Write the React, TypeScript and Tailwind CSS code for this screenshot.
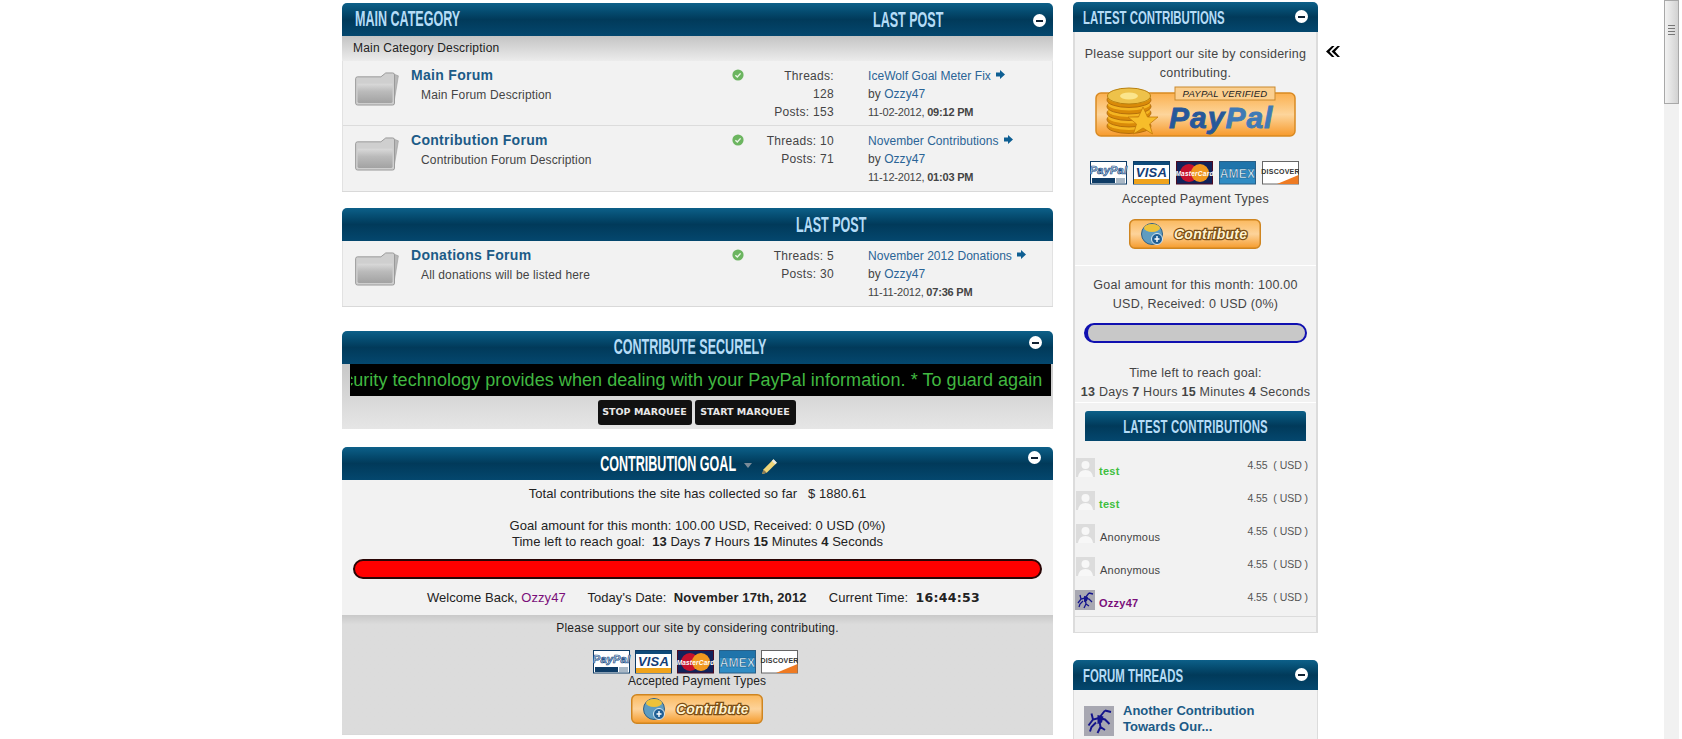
const arial = 'font-["Liberation_Sans",Arial,sans-serif]';

function Title({ children, center, white, side }: { children: string; center?: boolean; white?: boolean; side?: boolean }) {
  return (
    <span
      className={`inline-block whitespace-nowrap font-["Liberation_Sans",sans-serif] font-bold leading-none ${
        side ? 'text-[19px] scale-x-[.6]' : 'text-[22px] scale-x-[.57]'
      } ${center ? 'origin-center' : 'origin-left'} ${white ? 'text-white' : 'text-[#b5dcf7]'}`}
    >
      {children}
    </span>
  );
}

function Collapse({ className = '' }: { className?: string }) {
  return (
    <span className={`flex h-[13px] w-[13px] items-center justify-center rounded-full bg-white ${className}`}>
      <span className="h-[2px] w-[7px] bg-[#123]" />
    </span>
  );
}

function Folder() {
  return (
    <svg width="46" height="35" viewBox="0 0 46 36" className="shrink-0">
      <defs>
        <linearGradient id="fd" x1="0" y1="0" x2="0" y2="1">
          <stop offset="0" stopColor="#dadada" />
          <stop offset=".4" stopColor="#bbb" />
          <stop offset="1" stopColor="#a2a2a2" />
        </linearGradient>
      </defs>
      <path d="M40 3l5 2-5 30z" fill="#b8b8b8" stroke="#999" strokeWidth=".6" />
      <path d="M1 8q0-2 2-2h24l5-4h7q2 0 2 2v29q0 2-2 2H3q-2 0-2-2z" fill="#cfcfcf" stroke="#999" />
      <path d="M3 13h36v18q0 2-2 2H5q-2 0-2-2z" fill="url(#fd)" />
    </svg>
  );
}

function Check() {
  return (
    <svg width="12" height="12" viewBox="0 0 12 12" className="shrink-0">
      <circle cx="6" cy="6" r="5.6" fill="#6cb560" />
      <path d="M3.4 6.200l1.900 1.800 3.300-3.600" fill="none" stroke="#eaf6e6" strokeWidth="1.400" />
    </svg>
  );
}

function ArrowRight() {
  return (
    <svg width="9" height="9" viewBox="0 0 9 9" className="ml-[5px] inline-block align-[1px]">
      <path d="M0 2.500h4V0l5 4.500L4 9V6.500H0z" fill="#0e5f93" />
    </svg>
  );
}

function ForumRow({ title, desc, threads, posts, last, date, time, border }: {
  title: string;
  desc: string;
  threads: string;
  posts: string;
  last: string;
  date: string;
  time: string;
  border?: boolean;
}) {
  return (
    <div className={`flex h-[65px] items-start bg-[#f2f2f2] ${border ? 'border-b border-[#dcdcdc]' : ''}`}>
      <div className="ml-[11px] mt-[10px]">
        <Folder />
      </div>
      <div className="ml-[11px] mt-[5px] w-[321px]">
        <p className="text-[14px] font-bold leading-[18px] tracking-[.3px] text-[#1c5b87]">{title}</p>
        <p className="ml-[10px] mt-[2px] text-[12px] leading-[18px] tracking-[.15px] text-[#444]">{desc}</p>
      </div>
      <div className="mt-[8px]">
        <Check />
      </div>
      <p className="ml-[18px] mt-[6px] w-[72px] text-right text-[12px] leading-[18px] tracking-[.3px] text-[#444]">
        Threads: {threads}
        <br />
        Posts: {posts}
      </p>
      <div className="ml-[34px] mt-[6px] text-[12px] leading-[18px] tracking-[.05px] text-[#444]">
        <p className="whitespace-nowrap text-[#2a6496]">
          {last}
          <ArrowRight />
        </p>
        <p>
          by <span className="text-[#2a6496]">Ozzy47</span>
        </p>
        <p className="text-[11px] tracking-[-.2px]">
          {date}, <b className="font-bold">{time}</b>
        </p>
      </div>
    </div>
  );
}

function Header({ children, className = '' }: { children: React.ReactNode; className?: string }) {
  return (
    <div className={`relative flex items-center rounded-t-[5px] bg-gradient-to-b from-[#0d6089] via-[#013a5a] to-[#04476e] ${className}`}>
      {children}
    </div>
  );
}

function CardRow({ pitch, className = '' }: { pitch: number; className?: string }) {
  return (
    <svg width={pitch * 4 + 37} height="24" viewBox={`0 0 ${pitch * 4 + 37} 24`} className={className}>
      <g>
        <rect x=".5" y=".5" width="36" height="22.500" fill="#fff" stroke="#0e3c66" />
        <text x="18.500" y="13" textAnchor="middle" fontFamily="Liberation Sans" fontStyle="italic" fontWeight="700" fontSize="11" fill="#c4d8ec" stroke="#1d4f86" strokeWidth=".7">PayPal</text>
        <rect x="2" y="17" width="23" height="5" fill="#0e3c66" />
        <rect x="26" y="17" width="9" height="5" fill="#a9b8c6" />
      </g>
      <g transform={`translate(${pitch} 0)`}>
        <rect x=".5" y=".5" width="36" height="22.500" fill="#fff" stroke="#0e3c66" />
        <rect x="1" y="1" width="35" height="3" fill="#0e4a7a" />
        <rect x="1" y="18" width="35" height="5" fill="#efa31c" />
        <text x="18.500" y="16" textAnchor="middle" fontFamily="Liberation Sans" fontStyle="italic" fontWeight="700" fontSize="13" fill="#133d78">VISA</text>
      </g>
      <g transform={`translate(${pitch * 2} 0)`}>
        <rect x=".5" y=".5" width="36" height="22.500" fill="#12225a" stroke="#4d0b22" />
        <circle cx="13" cy="12" r="9" fill="#c5112d" />
        <circle cx="24" cy="12" r="9" fill="#f0971e" />
        <text x="18.500" y="14.500" textAnchor="middle" fontFamily="Liberation Sans" fontStyle="italic" fontWeight="700" fontSize="6.500" fill="#fff">MasterCard</text>
      </g>
      <g transform={`translate(${pitch * 3} 0)`}>
        <rect x=".5" y=".5" width="36" height="22.500" fill="#2f8cc4" stroke="#285f86" />
        <rect x="1" y="1" width="35" height="7" fill="#1f74ab" />
        <text x="18.500" y="17" textAnchor="middle" fontFamily="Liberation Sans" fontWeight="700" fontSize="12" fill="#e8f5fc" stroke="#0d5685" strokeWidth=".5">AMEX</text>
      </g>
      <g transform={`translate(${pitch * 4} 0)`}>
        <rect x=".5" y=".5" width="36" height="22.500" fill="#fff" stroke="#666" />
        <path d="M15 23L36.500 14v9z" fill="#ee7a22" />
        <text x="18.500" y="13" textAnchor="middle" fontFamily="Liberation Sans" fontWeight="700" fontSize="7" fill="#333">DISCOVER</text>
      </g>
    </svg>
  );
}

function Coins() {
  const rows = [38, 31.500, 25, 18.500, 12];
  return (
    <g>
      {rows.map((y) => (
        <g key={y}>
          <ellipse cx="22" cy={y + 1} rx="22" ry="7.500" fill="#d98a08" stroke="#a9640a" strokeWidth=".8" />
          <ellipse cx="22" cy={y - 1} rx="21" ry="6" fill="#f4b521" />
        </g>
      ))}
      <ellipse cx="22" cy="9" rx="21.500" ry="8" fill="#eec24a" stroke="#b9800f" />
      <ellipse cx="22" cy="9" rx="9" ry="3.500" fill="#fbe58c" />
      <path d="M36 20l4.500 10H51l-8.500 7 3 10-9.500-6-9.500 6 3-10-8.500-7h10.500z" fill="#f7bd2a" stroke="#c47a0a" strokeWidth=".8" />
    </g>
  );
}

function PayPalButton() {
  return (
    <svg width="202" height="52" viewBox="0 0 202 52" className="block">
      <defs>
        <linearGradient id="pp" x1="0" y1="0" x2="0" y2="1">
          <stop offset="0" stopColor="#fbb04f" />
          <stop offset=".5" stopColor="#fdd59b" />
          <stop offset="1" stopColor="#f79a2c" />
        </linearGradient>
      </defs>
      <rect x="1" y="7" width="199" height="43" rx="5" fill="url(#pp)" stroke="#d98a22" strokeWidth="1.500" />
      <rect x="80" y="1" width="100" height="13" fill="#fbcf8f" stroke="#c9892e" />
      <text x="130" y="11" textAnchor="middle" fontFamily="Liberation Sans" fontStyle="italic" fontSize="9.500" fill="#222">PAYPAL  VERIFIED</text>
      <g transform="translate(12 1)">
        <Coins />
      </g>
      <text x="74" y="42" fontFamily="Liberation Sans" fontStyle="italic" fontWeight="700" fontSize="30" fill="#27589a" stroke="#27589a" strokeWidth=".8" letterSpacing="1">
        Pay<tspan fill="#3f7ab6" stroke="#3f7ab6">Pal</tspan>
      </text>
    </svg>
  );
}

function ContributeButton() {
  return (
    <svg width="132" height="30" viewBox="0 0 132 30" className="block">
      <defs>
        <linearGradient id="cb" x1="0" y1="0" x2="0" y2="1">
          <stop offset="0" stopColor="#fbb95e" />
          <stop offset=".5" stopColor="#fdd39a" />
          <stop offset="1" stopColor="#f59b2c" />
        </linearGradient>
      </defs>
      <rect x=".75" y=".75" width="130.500" height="28.500" rx="5" fill="url(#cb)" stroke="#cf8520" strokeWidth="1.500" />
      <circle cx="23" cy="15" r="10.500" fill="#5f9cc0" stroke="#2f5f85" />
      <ellipse cx="23" cy="9" rx="8" ry="4" fill="#eec23a" />
      <circle cx="28" cy="20" r="5.500" fill="#1f5f95" stroke="#dbe9f2" />
      <path d="M28 17v6M25.500 20h5" stroke="#fff" strokeWidth="1.400" />
      <text x="45" y="20" fontFamily="Liberation Sans" fontStyle="italic" fontWeight="700" fontSize="14" fill="#fff3d0" stroke="#7a4c12" strokeWidth="2.500" paintOrder="stroke">Contribute</text>
    </svg>
  );
}

function OzzyArt({ size }: { size: number }) {
  return (
    <svg width={size} height={size} viewBox="0 0 20 20" className="shrink-0">
      <rect width="20" height="20" fill="#a8a8b2" />
      <path d="M10 8l4-5M14 3l4 1M10 8l4 1 3 3M10 8l-4 1-3 4M6 9L5 5M10 8l1 6-2 4M11 14l3 2M8 11l-3 3-1 3" fill="none" stroke="#14148c" strokeWidth="1.300" />
      <path d="M9 6l4 1-1 4-3 1z" fill="#14148c" />
    </svg>
  );
}

function Avatar({ ozzy }: { ozzy?: boolean }) {
  if (ozzy) return <OzzyArt size={20} />;
  return (
    <svg width="19" height="19" viewBox="0 0 19 19" className="ml-[1px] shrink-0">
      <rect width="19" height="19" fill="#dcdcdc" />
      <circle cx="9.500" cy="7" r="4" fill="#f7f7f7" />
      <path d="M2 19q1-7 7.500-7T17 19z" fill="#f7f7f7" />
    </svg>
  );
}

function ContribRow({ name, kind }: { name: string; kind: 'test' | 'anon' | 'ozzy' }) {
  return (
    <div className="flex h-[33px] items-start pr-[8px]">
      <Avatar ozzy={kind === 'ozzy'} />
      <span
        className={`mt-[7px] text-[11px] leading-[13px] ${kind === 'anon' ? 'ml-[5px] font-normal text-[#444]' : 'ml-[4px] font-bold'} ${
          kind === 'test' ? 'text-[#3fbf3f]' : ''
        } ${kind === 'ozzy' ? 'text-[#7a0f7a]' : ''}`}
      >
        {name}
      </span>
      <span className="ml-auto mt-[1px] whitespace-pre text-[10.500px] leading-[13px] tracking-[-.05px] text-[#555]">4.55  ( USD )</span>
    </div>
  );
}

const contributors: { name: string; kind: 'test' | 'anon' | 'ozzy' }[] = [
  { name: 'test', kind: 'test' },
  { name: 'test', kind: 'test' },
  { name: 'Anonymous', kind: 'anon' },
  { name: 'Anonymous', kind: 'anon' },
  { name: 'Ozzy47', kind: 'ozzy' },
];

export default function App() {
  return (
    <div className={`${arial} flex h-[739px] overflow-hidden bg-white text-[12px] text-[#333]`}>
      {/* main column */}
      <main className="ml-[342px] w-[711px] shrink-0 pt-[3px]">
        <section className="border-b border-[#d9d9d9]">
          <Header className="h-[33px] pl-[13px]">
            <div className="w-[518px]">
              <Title>MAIN CATEGORY</Title>
            </div>
            <Title>LAST POST</Title>
            <Collapse className="absolute right-[7px] top-[11px]" />
          </Header>
          <div className="flex h-[25px] items-center bg-gradient-to-b from-[#c4c4c4] to-[#ececec] pb-[2px] pl-[11px] tracking-[.2px] text-[#222]">
            Main Category Description
          </div>
          <div className="border-x border-[#e2e2e2]">
            <ForumRow title="Main Forum" desc="Main Forum Description" threads="128" posts="153" last="IceWolf Goal Meter Fix" date="11-02-2012" time="09:12 PM" border />
            <ForumRow title="Contribution Forum" desc="Contribution Forum Description" threads="10" posts="71" last="November Contributions" date="11-12-2012" time="01:03 PM" />
          </div>
        </section>

        <section className="mt-[16px] border-b border-[#d9d9d9]">
          <Header className="h-[33px] pl-[454px]">
            <Title>LAST POST</Title>
          </Header>
          <div className="border-x border-[#e2e2e2]">
            <ForumRow title="Donations Forum" desc="All donations will be listed here" threads="5" posts="30" last="November 2012 Donations" date="11-11-2012" time="07:36 PM" />
          </div>
        </section>

        <section className="mt-[24px]">
          <Header className="h-[33px] justify-center pb-px pr-[14px]">
            <Title center>CONTRIBUTE SECURELY</Title>
            <Collapse className="absolute right-[11px] top-[5px]" />
          </Header>
          <div className="bg-gradient-to-b from-[#c8c8c8] to-[#e6e6e6]">
            <div className="ml-[8px] mr-[2px] bg-black py-[5px] pl-[1px] pr-[9px] text-[18px] leading-[22px] text-[#41b841]">
              <div className="overflow-hidden whitespace-nowrap tracking-[.06px]">
                <span className="ml-[-26px] inline-block">
                  security technology provides when dealing with your PayPal information. * To guard again
                </span>
              </div>
            </div>
            <div className="flex h-[33px] items-start justify-center gap-[3px] pr-[2px] pt-[4px] font-['DejaVu_Sans',sans-serif] text-[9.500px] font-bold text-[#e8e8e8]">
              <span className="flex h-[25px] w-[94px] items-center justify-center rounded-[3px] bg-[#111]">STOP MARQUEE</span>
              <span className="flex h-[25px] w-[101px] items-center justify-center rounded-[3px] bg-[#111]">START MARQUEE</span>
            </div>
          </div>
        </section>

        <section className="mt-[18px] border-b border-[#d9d9d9]">
          <Header className="h-[33px]">
            <div className="ml-[176px] flex w-[300px] justify-center">
              <Title center white>CONTRIBUTION GOAL</Title>
            </div>
            <span className="ml-[-74px] mt-[3px] h-0 w-0 border-x-[4px] border-t-[5px] border-x-transparent border-t-[#7b8b98]" />
            <svg width="18" height="18" viewBox="0 0 16 16" className="ml-[8px] mt-[5px]">
              <path d="M2 15l1-4L12 2l3 3-9 9z" fill="#f0d678" />
              <path d="M12 2l3 3-1.500 1.500-3-3z" fill="#e8e8e8" />
              <path d="M2 15l1-4 3 3z" fill="#8a7a55" />
            </svg>
            <Collapse className="absolute right-[12px] top-[4px]" />
          </Header>
          <div className="h-[135px] bg-[#f2f2f2] pt-[6px] text-center text-[13px] leading-[16px] tracking-[.05px] text-[#222]">
            <p className="whitespace-pre">Total contributions the site has collected so far   $ 1880.61</p>
            <p className="mt-[16px]">Goal amount for this month: 100.00 USD, Received: 0 USD (0%)</p>
            <p className="whitespace-pre">
              Time left to reach goal:  <b>13</b> Days <b>7</b> Hours <b>15</b> Minutes <b>4</b> Seconds
            </p>
            <div className="mx-[11px] mt-[9px] h-[20px] rounded-full border-2 border-[#2a0505] bg-[#ff0000]" />
            <p className="mt-[11px] whitespace-pre pl-[12px]">
              Welcome Back, <span className="text-[#7a0f7a]">Ozzy47</span>
              {'      Today\'s Date:  '}
              <b className="tracking-[.15px]">November 17th, 2012</b>
              {'      Current Time:  '}
              <b className="font-['DejaVu_Sans',sans-serif] text-[12.500px] tracking-[.3px]">16:44:53</b>
            </p>
          </div>
          <div className="flex h-[119px] flex-col items-center bg-gradient-to-b from-[#c9c9c9] to-[#dcdcdc] to-[8%] pt-[6px] tracking-[.2px] text-[#222]">
            <p className="leading-[14px]">Please support our site by considering contributing.</p>
            <CardRow pitch={42} className="mr-[4px] mt-[15px]" />
            <p className="mr-[1px] leading-[14px] tracking-[.1px]">Accepted Payment Types</p>
            <div className="mr-[2px] mt-[6px]">
              <ContributeButton />
            </div>
          </div>
        </section>
      </main>

      {/* right column */}
      <aside className="ml-[20px] w-[245px] shrink-0 pt-[2px]">
        <section>
          <Header className="h-[30px] pl-[10px]">
            <Title side>LATEST CONTRIBUTIONS</Title>
            <Collapse className="absolute right-[10px] top-[8px]" />
          </Header>
          <div className="flex flex-col items-center border-x-2 border-b border-[#dcdcdc] bg-[#f2f2f2] pt-[13px] text-[12.500px] leading-[19px] tracking-[.25px] text-[#444]">
            <p className="px-[8px] text-center">Please support our site by considering contributing.</p>
            <div className="mt-[3px]">
              <PayPalButton />
            </div>
            <CardRow pitch={43} className="mr-[2px] mt-[23px]" />
            <p className="mt-[5px]">Accepted Payment Types</p>
            <div className="mr-[2px] mt-[10px]">
              <ContributeButton />
            </div>
            <div className="mt-[16px] h-px w-full bg-white" />
            <p className="mt-[10px] px-[8px] text-center">Goal amount for this month: 100.00 USD, Received: 0 USD (0%)</p>
            <div className="mt-[9px] h-[20px] w-[223px] rounded-full border-2 border-l-4 border-[#1010b0] bg-[#c8c8c8]" />
            <p className="mt-[21px] text-center">
              Time left to reach goal:
              <br />
              <span className="whitespace-nowrap">
                <b>13</b> Days <b>7</b> Hours <b>15</b> Minutes <b>4</b> Seconds
              </span>
            </p>
            <div className="h-px w-full bg-white" />
            <div className="mt-[8px] flex h-[30px] w-[221px] items-center justify-center rounded-t-[3px] bg-gradient-to-b from-[#0d6089] via-[#013a5a] to-[#04476e]">
              <Title center side>LATEST CONTRIBUTIONS</Title>
            </div>
            <div className="mt-[17px] h-[158px] w-full">
              {contributors.map((c, i) => (
                <ContribRow key={i} name={c.name} kind={c.kind} />
              ))}
            </div>
            <div className="h-[16px] w-full border-t border-[#dcdcdc]" />
          </div>
        </section>
        <section className="mt-[27px]">
          <Header className="h-[30px] pl-[10px]">
            <Title side>FORUM THREADS</Title>
            <Collapse className="absolute right-[10px] top-[8px]" />
          </Header>
          <div className="flex h-[60px] items-start gap-[9px] border-x border-[#dcdcdc] bg-[#f2f2f2] pl-[10px] pt-[16px]">
            <OzzyArt size={30} />
            <p className="mt-[-3px] text-[13px] font-bold leading-[16px] text-[#1c5b87]">
              Another Contribution
              <br />
              Towards Our...
            </p>
          </div>
        </section>
      </aside>

      {/* collapse toggle */}
      <svg width="14" height="11" viewBox="0 0 14 11" className="ml-[8px] mt-[46px] shrink-0">
        <path d="M6 0L0 5.500 6 11h2.500L3.500 5.500 8.500 0zM11.500 0l-6 5.500 6 5.500H14L9 5.500 14 0z" fill="#000" />
      </svg>

      {/* page scrollbar */}
      <div className="ml-auto mr-[3px] flex w-[15px] shrink-0 flex-col bg-[#f1f1f1]">
        <div className="flex h-[104px] flex-col items-center gap-[2px] border border-[#a8a8a8] bg-gradient-to-r from-[#f2f2f2] to-[#d2d2d2] pt-[24px]">
          <span className="h-px w-[7px] bg-[#777]" />
          <span className="h-px w-[7px] bg-[#777]" />
          <span className="h-px w-[7px] bg-[#777]" />
          <span className="h-px w-[7px] bg-[#777]" />
        </div>
      </div>
    </div>
  );
}
